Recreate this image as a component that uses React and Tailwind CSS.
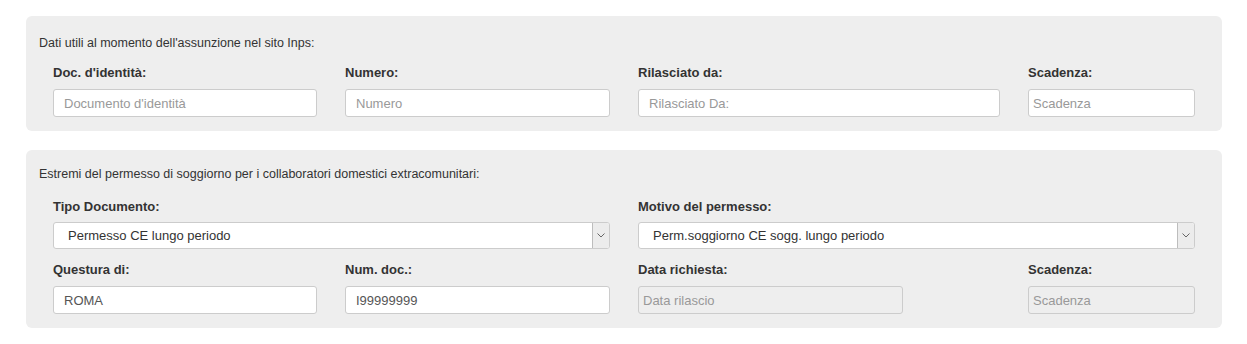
function Label({ children, className = "mb-[7px]" }) {
  return (
    <div className={"text-[13px] leading-[18px] font-bold text-[#333333] " + className}>{children}</div>
  );
}

function TextInput({ placeholder, value, disabled, className = "" }) {
  return (
    <input
      type="text"
      placeholder={placeholder}
      defaultValue={value}
      disabled={disabled}
      className={
        "h-[28px] rounded-[3px] border border-[#cccccc] text-[13px] text-[#555555] placeholder:text-[#999999] " +
        (disabled ? "bg-[#eeeeee] px-[4px] " : "bg-white px-[10px] ") +
        className
      }
    />
  );
}

function SelectBox({ value }) {
  return (
    <div className="h-[27px] flex items-stretch rounded-[3px] border border-[#cccccc] bg-white pl-[14px] text-[13px] text-[#333333]">
      <div className="flex-1 flex items-center">{value}</div>
      <div className="w-[17px] flex items-center justify-center bg-[#ececec] border-l border-[#bdbdbd] rounded-r-[2px]">
        <svg width="8" height="5" viewBox="0 0 8 5" fill="none">
          <path d="M0.5 0.5 L4 4 L7.5 0.5" stroke="#666" strokeWidth="1" />
        </svg>
      </div>
    </div>
  );
}

export default function App() {
  return (
    <div className="bg-white min-h-[344px] pl-[26px] pt-[16px] w-[1247px]" style={{ fontFamily: '"Liberation Sans", Arial, sans-serif' }}>
      <section className="w-[1196px] bg-[#eeeeee] rounded-[6px] pl-[13px] pr-[27px] pt-[19px] pb-[14px]">
        <div className="text-[12.5px] leading-[17px] text-[#333333] mb-[12px]">
          Dati utili al momento dell'assunzione nel sito Inps:
        </div>
        <div className="grid grid-cols-[264px_265px_362px_167px] gap-x-[28px] pl-[14px]">
          <div>
            <Label>Doc. d'identità:</Label>
            <TextInput placeholder="Documento d'identità" className="w-full" />
          </div>
          <div>
            <Label>Numero:</Label>
            <TextInput placeholder="Numero" className="w-full" />
          </div>
          <div>
            <Label>Rilasciato da:</Label>
            <TextInput placeholder="Rilasciato Da:" className="w-full" />
          </div>
          <div>
            <Label>Scadenza:</Label>
            <TextInput placeholder="Scadenza" className="w-full !px-[4px]" />
          </div>
        </div>
      </section>

      <section className="w-[1196px] bg-[#eeeeee] rounded-[6px] pl-[13px] pr-[27px] pt-[16px] pb-[14px] mt-[19px]">
        <div className="text-[12.5px] leading-[17px] text-[#333333] mb-[15px]">
          Estremi del permesso di soggiorno per i collaboratori domestici extracomunitari:
        </div>
        <div className="grid grid-cols-[264px_265px_362px_167px] gap-x-[28px] gap-y-[12px] pl-[14px]">
          <div className="col-span-2">
            <Label className="mb-[6px]">Tipo Documento:</Label>
            <SelectBox value="Permesso CE lungo periodo" />
          </div>
          <div className="col-span-2">
            <Label className="mb-[6px]">Motivo del permesso:</Label>
            <SelectBox value="Perm.soggiorno CE sogg. lungo periodo" />
          </div>
          <div>
            <Label>Questura di:</Label>
            <TextInput value="ROMA" className="w-full" />
          </div>
          <div>
            <Label>Num. doc.:</Label>
            <TextInput value="I99999999" className="w-full" />
          </div>
          <div>
            <Label>Data richiesta:</Label>
            <TextInput placeholder="Data rilascio" disabled className="w-[265px]" />
          </div>
          <div>
            <Label>Scadenza:</Label>
            <TextInput placeholder="Scadenza" disabled className="w-full" />
          </div>
        </div>
      </section>
    </div>
  );
}
